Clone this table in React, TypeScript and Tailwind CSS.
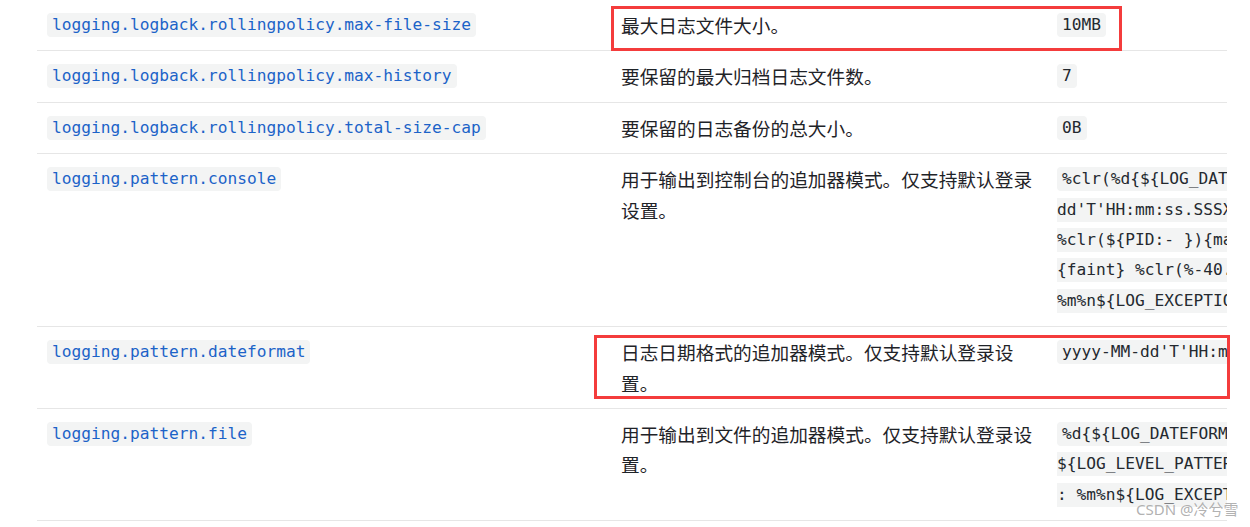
const mono = "font-['DejaVu_Sans_Mono',monospace] text-[16.2px] leading-[30.4px]";
const cjk = "font-['Noto_Sans_CJK_SC','Noto_Sans',sans-serif] text-[18.7px] leading-[30.4px] text-[#1f2328]";

const keyCode = "bg-[#f3f4f4] text-[#1c63c8] rounded-[4px] px-[5px] pt-[2px] pb-[3px]";
const valCode = "bg-[#f3f4f4] text-[#24292f] pt-[2px] pb-[3px] whitespace-nowrap";

type Row = {
  key: string;
  desc: string;
  value: string[];
};

const rows: Row[] = [
  {
    key: "logging.logback.rollingpolicy.max-file-size",
    desc: "最大日志文件大小。",
    value: ["10MB"],
  },
  {
    key: "logging.logback.rollingpolicy.max-history",
    desc: "要保留的最大归档日志文件数。",
    value: ["7"],
  },
  {
    key: "logging.logback.rollingpolicy.total-size-cap",
    desc: "要保留的日志备份的总大小。",
    value: ["0B"],
  },
  {
    key: "logging.pattern.console",
    desc: "用于输出到控制台的追加器模式。仅支持默认登录设置。",
    value: [
      "%clr(%d{${LOG_DATEFORMAT_PATTERN:-yyyy-MM-",
      "dd'T'HH:mm:ss.SSSXXX}}){faint} %clr(${LOG_LEVEL_PATTERN:-%5p})",
      "%clr(${PID:- }){magenta} %clr(---){faint} %clr([%15.15t])",
      "{faint} %clr(%-40.40logger{39}){cyan} %clr(:){faint}",
      "%m%n${LOG_EXCEPTION_CONVERSION_WORD:-%wEx}",
    ],
  },
  {
    key: "logging.pattern.dateformat",
    desc: "日志日期格式的追加器模式。仅支持默认登录设置。",
    value: ["yyyy-MM-dd'T'HH:mm:ss.SSSXXX"],
  },
  {
    key: "logging.pattern.file",
    desc: "用于输出到文件的追加器模式。仅支持默认登录设置。",
    value: [
      "%d{${LOG_DATEFORMAT_PATTERN:-yyyy-MM-dd'T'HH:mm:ss.SSSXXX}}",
      "${LOG_LEVEL_PATTERN:-%5p} ${PID:- } --- [%t] %-40.40logger{39}",
      ": %m%n${LOG_EXCEPTION_CONVERSION_WORD:-%wEx}",
    ],
  },
];

function ValueCell({ lines }: { lines: string[] }) {
  if (lines.length === 1 && lines[0].length < 8) {
    return <span className={`${valCode} px-[5px] rounded-[4px]`}>{lines[0]}</span>;
  }
  return (
    <>
      {lines.map((line, i) => (
        <span key={i}>
          <span className={`${valCode} ${i === 0 ? "pl-[5px] rounded-l-[4px]" : ""}`}>{line}</span>
          {i < lines.length - 1 && <br />}
        </span>
      ))}
    </>
  );
}

export default function App() {
  return (
    <div className="relative w-[1250px] h-[527px] bg-white overflow-hidden">
      <div className="ml-[37px] w-[1190px] overflow-hidden">
        <table className="table-fixed border-collapse w-[1800px]">
          <colgroup>
            <col className="w-[574px]" />
            <col className="w-[436px]" />
            <col className="w-[790px]" />
          </colgroup>
          <tbody>
            {rows.map((row) => (
              <tr key={row.key} className="border-b border-[#e6e6e6]">
                <td className={`${mono} align-top px-[10px] py-[10px]`}>
                  <span className={keyCode}>{row.key}</span>
                </td>
                <td className={`${cjk} align-top px-[10px] py-[10px]`}>{row.desc}</td>
                <td className={`${mono} align-top px-[10px] py-[10px]`}>
                  <ValueCell lines={row.value} />
                </td>
              </tr>
            ))}
          </tbody>
        </table>
      </div>

      {/* annotation boxes */}
      <div className="absolute left-[611px] top-[6px] w-[511px] h-[45px] border-[3px] border-[#f43c3c]" />
      <div className="absolute left-[594px] top-[335px] w-[636px] h-[64px] border-[3px] border-[#f43c3c]" />

      {/* watermark */}
      <div className="absolute left-[1136px] top-[500px] font-['Noto_Sans','Noto_Sans_CJK_SC',sans-serif] text-[15px] leading-[18px] text-[#a8a8a8]/90">
        CSDN @冷兮雪
      </div>
    </div>
  );
}
